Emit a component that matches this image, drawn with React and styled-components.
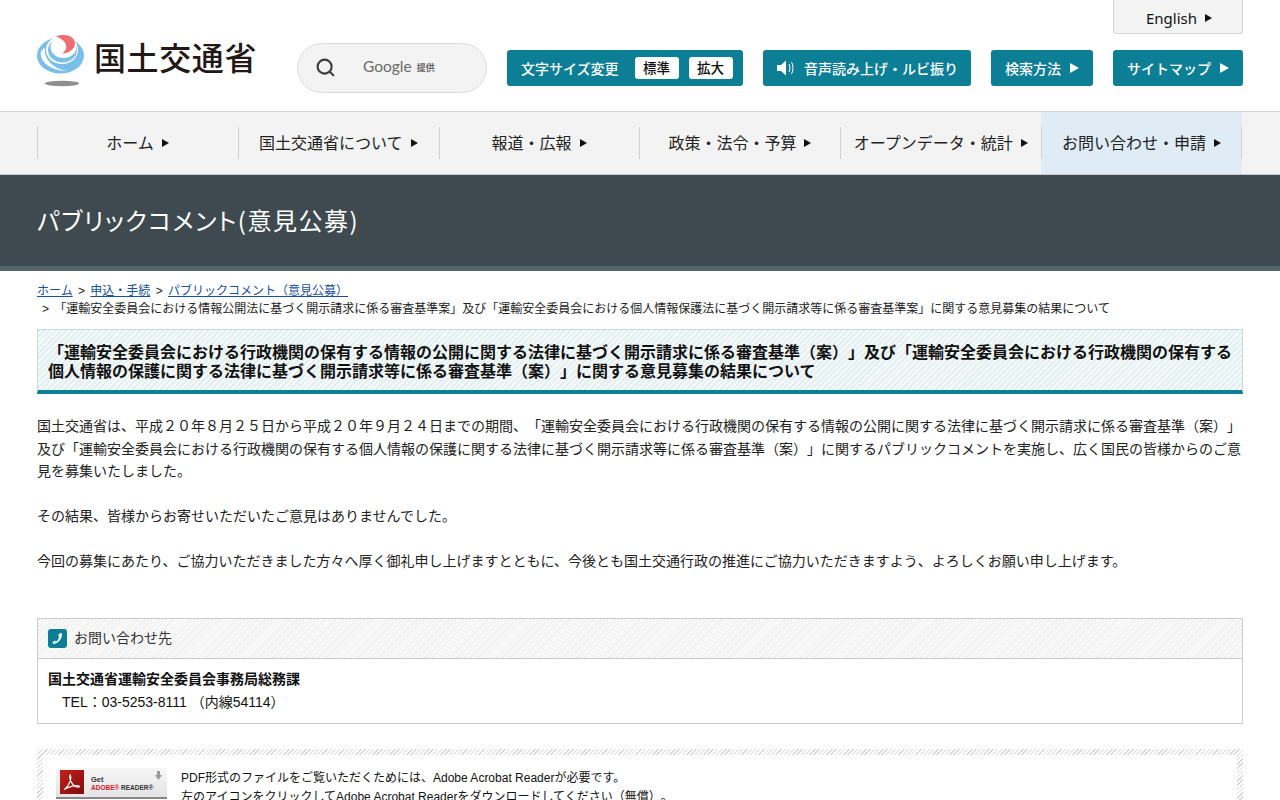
import React from "react";
import styled, { createGlobalStyle } from "styled-components";
import { Search } from "lucide-react";

const Global = createGlobalStyle`
  html, body { margin: 0; padding: 0; background: #fff; }
  body {
    font-family: "Liberation Sans", "Noto Sans CJK JP", sans-serif;
    font-size: 14px;
    line-height: 1.6;
    color: #222;
    text-spacing-trim: space-all;
  }
  * { box-sizing: border-box; }
`;

const TEAL = "#0c7e96";

const Header = styled.header`
  height: 112px;
  padding: 0 37px;
  border-bottom: 1px solid #d4d4d4;
`;
const TopRow = styled.div`
  display: flex;
  justify-content: flex-end;
  height: 34px;
`;
const EnglishTab = styled.a`
  width: 130px;
  height: 34px;
  display: flex;
  align-items: center;
  justify-content: center;
  gap: 8px;
  padding: 3px 0 0 2px;
  background: #f3f3f3;
  border: 1px solid #d5d5d5;
  border-top: none;
  border-radius: 0 0 3px 3px;
  font-family: "Noto Sans", sans-serif;
  font-size: 15px;
  color: #111;
`;
const MainRow = styled.div`
  display: flex;
  align-items: flex-start;
`;
const LogoLink = styled.a`
  width: 219px;
  height: 52px;
  display: flex;
  align-items: flex-start;
  gap: 10px;
`;
const LogoText = styled.span`
  font-family: "Noto Sans CJK JP", sans-serif;
  font-size: 32px;
  font-weight: 500;
  letter-spacing: 0.6px;
  line-height: 44px;
  margin-left: -1px;
  color: #231815;
  white-space: nowrap;
`;
const SearchBox = styled.div`
  width: 190px;
  height: 50px;
  margin: 9px 20px 0 41px;
  padding-left: 17px;
  display: flex;
  align-items: center;
  background: #f3f3f3;
  border: 1px solid #dcdcdc;
  border-radius: 25px;
  color: #3c3c3c;
  svg { margin-bottom: 1px; }
`;
const GoogleWord = styled.span`
  margin: 0 0 4px 27px;
  font-family: "Lato", sans-serif;
  font-size: 15.500px;
  line-height: 20px;
  color: #6a6a6a;
`;
const Provided = styled.span`
  margin-left: 5px;
  font-family: "Noto Sans CJK JP", sans-serif;
  font-size: 9px;
  font-weight: 700;
  color: #666;
`;
const TealButton = styled.a`
  width: ${(p) => p.$w}px;
  height: 36px;
  margin: 16px ${(p) => p.$mr || 0}px 0 0;
  padding: 0 ${(p) => p.$px || 14}px;
  display: flex;
  align-items: center;
  justify-content: ${(p) => p.$justify || "space-between"};
  background: ${TEAL};
  border-radius: 3px;
  color: #fff;
  font-family: "Noto Sans CJK JP", sans-serif;
  font-size: 14px;
  font-weight: 500;
  white-space: nowrap;
`;
const SizeChip = styled.span`
  width: 44px;
  height: 22px;
  margin-left: ${(p) => p.$ml}px;
  display: flex;
  align-items: center;
  justify-content: center;
  background: #fff;
  border-radius: 3px;
  color: #111;
  font-size: 13.500px;
`;
const ButtonLabel = styled.span`
  margin-left: 4px;
`;
const Triangle = styled.i`
  display: inline-block;
  flex: none;
  border-style: solid;
  border-color: transparent;
  border-left-color: ${(p) => p.$color || "#111"};
  border-width: ${(p) => p.$h || 4}px 0 ${(p) => p.$h || 4}px ${(p) => p.$w || 7}px;
`;

const Nav = styled.nav`
  height: 63px;
  padding: 0 38px 0 37px;
  display: grid;
  grid-template-columns: repeat(6, 1fr);
  background: #f3f3f3;
  border-bottom: 1px solid #c8c8c8;
`;
const NavItem = styled.a`
  position: relative;
  display: flex;
  align-items: center;
  justify-content: center;
  gap: 8px;
  background: ${(p) => (p.$active ? "#dfecf6" : "transparent")};
  font-family: "Noto Sans CJK JP", sans-serif;
  font-size: 16px;
  color: #222;
  white-space: nowrap;
  &::before {
    content: "";
    position: absolute;
    left: 0;
    top: 15px;
    height: 32px;
    width: 1px;
    background: #d0d0d0;
  }
  &::after {
    content: "";
    position: absolute;
    right: 0;
    top: 15px;
    height: 32px;
    width: 1px;
    background: ${(p) => (p.$active ? "#d0d0d0" : "transparent")};
  }
`;

const Banner = styled.div`
  height: 96px;
  padding: 0 37px;
  display: flex;
  align-items: center;
  background: #3e4a50;
  border-bottom: 5px solid #55646b;
`;
const BannerTitle = styled.h1`
  margin: 0;
  font-family: "Noto Sans CJK JP", sans-serif;
  font-size: 24px;
  font-weight: 400;
  font-feature-settings: "palt";
  letter-spacing: 1.500px;
  line-height: 1.2;
  color: #fff;
`;

const Main = styled.main`
  padding: 12px 37px 0;
`;
const Crumbs = styled.div`
  font-size: 12px;
  line-height: 17px;
  height: 17px;
  a { color: #1a4fa0; text-decoration: underline; }
`;
const CrumbSep = styled.span`
  margin: 0 2px;
`;
const CurrentCrumb = styled.div`
  padding-left: 5px;
  font-size: 12px;
  line-height: 18px;
  color: #222;
`;
const CurrentMark = styled.span`
  margin-right: 2px;
`;
const PageTitle = styled.h2`
  margin: 11px 0 0;
  height: 65px;
  padding: 13px 10px 0;
  font-size: 16px;
  font-weight: 700;
  line-height: 19px;
  color: #111;
  border: 1px solid #c6dade;
  border-bottom: 4px solid ${TEAL};
  background: repeating-linear-gradient(-45deg, #e4eff2 0 2px, #f4f9fa 2px 4px);
`;
const Lead = styled.p`
  margin: 21.300px 0 0;
  font-size: 14px;
  line-height: 22.400px;
  color: #222;
`;
const ContactBox = styled.section`
  margin-top: 45.700px;
  border: 1px solid #ccc;
`;
const ContactHead = styled.div`
  height: 40px;
  padding-left: 10px;
  display: flex;
  align-items: center;
  gap: 7px;
  font-size: 14px;
  color: #333;
  border-bottom: 1px solid #ccc;
  background: repeating-linear-gradient(-45deg, #eeeeee 0 1px, #fbfbfb 1px 2.500px);
`;
const PhoneIcon = styled.span`
  width: 19px;
  height: 19px;
  display: flex;
  align-items: center;
  justify-content: center;
  background: ${TEAL};
  border-radius: 3px;
`;
const ContactBody = styled.div`
  padding: 9px 10px;
  font-size: 14px;
  line-height: 23px;
  color: #111;
`;
const ContactName = styled.div`
  font-weight: 700;
`;
const ContactTel = styled.div`
  padding-left: 14px;
`;
const PdfBox = styled.section`
  margin: 25px 0 30px;
  padding: 6px;
  background: repeating-linear-gradient(-45deg, #d6d6d6 0 1px, #fff 1px 3px);
`;
const PdfInner = styled.div`
  padding: 13px 13px 14px;
  display: flex;
  gap: 14px;
  background: #fff;
`;
const Badge = styled.a`
  position: relative;
  flex: none;
  width: 111px;
  height: 31px;
  display: flex;
  align-items: center;
  gap: 7px;
  padding: 0 0 0 4px;
  background: linear-gradient(#f6f6f6, #e4e4e4);
  border-bottom: 2px solid #888;
  font-family: "Liberation Sans", sans-serif;
`;
const BadgeMark = styled.span`
  width: 24px;
  height: 24px;
  display: flex;
  align-items: center;
  justify-content: center;
  background: linear-gradient(135deg, #c8201c, #7d0c0c);
`;
const BadgeText = styled.span`
  display: flex;
  flex-direction: column;
  padding-top: 3px;
  font-size: 6.500px;
  font-weight: 700;
  line-height: 8px;
  color: #333;
  white-space: nowrap;
`;
const BadgeGet = styled.span`
  font-size: 7.500px;
`;
const BadgeRed = styled.span`
  color: #d8202a;
`;
const BadgeArrow = styled.svg`
  position: absolute;
  top: 3px;
  right: 5px;
`;
const PdfText = styled.p`
  margin: 1px 0 0;
  font-size: 12px;
  line-height: 19px;
  color: #111;
`;

function Logo() {
  return (
    <svg width="48" height="53" viewBox="0 0 48 53" style={{ flex: "none" }}>
      <ellipse cx="23.5" cy="21.5" rx="23.5" ry="18" fill="#79bfea" />
      <ellipse cx="25" cy="16" rx="16" ry="14" fill="#fff" />
      <ellipse cx="25.5" cy="16" rx="14.5" ry="12.5" fill="#79bfea" />
      <ellipse cx="26.5" cy="13" rx="13" ry="11" fill="#fff" />
      <path d="M19 2.500C28 -1 38 2 38 9.500 38 16 30 20 25 19.500 31 16 32 7 19 2.500Z" fill="#ee6f73" />
      <path d="M8 14C6 24 16 35 30 37 20 37 6 32 4 22 3 18 5 15 8 14Z" fill="#fff" />
      <ellipse cx="25" cy="49.500" rx="17" ry="2.700" fill="#8f8f8f" />
    </svg>
  );
}

function Speaker() {
  return (
    <svg width="20" height="18" viewBox="0 0 20 18" style={{ flex: "none" }}>
      <path d="M1 6h4l5-4.500v15L5 12H1z" fill="#fff" />
      <path d="M13 5c1.300 2.400 1.300 5.600 0 8M15.500 3c2 3.500 2 8.500 0 12" stroke="#fff" strokeWidth="1" fill="none" />
    </svg>
  );
}

function Phone() {
  return (
    <svg width="13" height="13" viewBox="0 0 13 13">
      <path d="M9 1l2 .4c.3 4.800-3.200 9.600-8.300 10.600L1.300 10.500 4 8.600l1 1.100C7 8.500 8 6.500 8 4.200L7 3.600z" fill="#fff" />
    </svg>
  );
}

function AcrobatMark() {
  return (
    <svg width="20" height="20" viewBox="0 0 20 20">
      <path
        d="M2 17.500c2-.8 4-3.500 6-8 .8-2.200 1-5 .2-6.500-.8 1.500-.3 4.500 1 7 1.500 2.800 3.500 4.500 5.500 5 1.200.3 2.500 0 2.800-.6-1-1-4-1-7-.2-3 .7-6 2-8.500 3.300z"
        fill="none"
        stroke="#fff"
        strokeWidth="1.200"
      />
    </svg>
  );
}

const navItems = ["ホーム", "国土交通省について", "報道・広報", "政策・法令・予算", "オープンデータ・統計", "お問い合わせ・申請"];

export default function App() {
  return (
    <>
      <Global />
      <Header>
        <TopRow>
          <EnglishTab>English <Triangle $h={4} $w={7} /></EnglishTab>
        </TopRow>
        <MainRow>
          <LogoLink>
            <Logo />
            <LogoText>国土交通省</LogoText>
          </LogoLink>
          <SearchBox>
            <Search size={21} strokeWidth={2.4} />
            <GoogleWord>Google</GoogleWord>
            <Provided>提供</Provided>
          </SearchBox>
          <TealButton $w={236} $mr={20} $px={10} $justify="flex-start">
            <ButtonLabel>文字サイズ変更</ButtonLabel>
            <SizeChip $ml={16}>標準</SizeChip>
            <SizeChip $ml={10}>拡大</SizeChip>
          </TealButton>
          <TealButton $w={208} $mr={20} $px={13}>
            <Speaker />
            <span>音声読み上げ・ルビ振り</span>
          </TealButton>
          <TealButton $w={102} $mr={20} $px={14}>
            <span>検索方法</span>
            <Triangle $color="#fff" $h={5} $w={9} />
          </TealButton>
          <TealButton $w={130} $px={14}>
            <span>サイトマップ</span>
            <Triangle $color="#fff" $h={5} $w={9} />
          </TealButton>
        </MainRow>
      </Header>
      <Nav>
        {navItems.map((t, i) => (
          <NavItem key={t} $active={i === 5}>
            {t}
            <Triangle $h={4} $w={7} />
          </NavItem>
        ))}
      </Nav>
      <Banner>
        <BannerTitle>パブリックコメント(意見公募)</BannerTitle>
      </Banner>
      <Main>
        <Crumbs>
          <a href="#h">ホーム</a> <CrumbSep>&gt;</CrumbSep> <a href="#a">申込・手続</a> <CrumbSep>&gt;</CrumbSep> <a href="#b">パブリックコメント（意見公募）</a>
        </Crumbs>
        <CurrentCrumb>
          <CurrentMark>&gt;</CurrentMark> 「運輸安全委員会における情報公開法に基づく開示請求に係る審査基準案」及び「運輸安全委員会における個人情報保護法に基づく開示請求等に係る審査基準案」に関する意見募集の結果について
        </CurrentCrumb>
        <PageTitle>
          「運輸安全委員会における行政機関の保有する情報の公開に関する法律に基づく開示請求に係る審査基準（案）」及び「運輸安全委員会における行政機関の保有する個人情報の保護に関する法律に基づく開示請求等に係る審査基準（案）」に関する意見募集の結果について
        </PageTitle>
        <Lead>
          国土交通省は、平成２０年８月２５日から平成２０年９月２４日までの期間、「運輸安全委員会における行政機関の保有する情報の公開に関する法律に基づく開示請求に係る審査基準（案）」及び「運輸安全委員会における行政機関の保有する個人情報の保護に関する法律に基づく開示請求等に係る審査基準（案）」に関するパブリックコメントを実施し、広く国民の皆様からのご意見を募集いたしました。
          <br /><br />
          その結果、皆様からお寄せいただいたご意見はありませんでした。
          <br /><br />
          今回の募集にあたり、ご協力いただきました方々へ厚く御礼申し上げますとともに、今後とも国土交通行政の推進にご協力いただきますよう、よろしくお願い申し上げます。
        </Lead>
        <ContactBox>
          <ContactHead>
            <PhoneIcon><Phone /></PhoneIcon>
            お問い合わせ先
          </ContactHead>
          <ContactBody>
            <ContactName>国土交通省運輸安全委員会事務局総務課</ContactName>
            <ContactTel>TEL：03-5253-8111 （内線54114）</ContactTel>
          </ContactBody>
        </ContactBox>
        <PdfBox>
          <PdfInner>
            <Badge>
              <BadgeMark><AcrobatMark /></BadgeMark>
              <BadgeText>
                <BadgeGet>Get</BadgeGet>
                <span><BadgeRed>ADOBE®</BadgeRed> READER®</span>
              </BadgeText>
              <BadgeArrow width="7" height="9" viewBox="0 0 7 9">
                <path d="M2 0h3v4h2L3.500 9 0 4h2z" fill="#9a9a9a" />
              </BadgeArrow>
            </Badge>
            <PdfText>
              PDF形式のファイルをご覧いただくためには、Adobe Acrobat Readerが必要です。
              <br />
              左のアイコンをクリックしてAdobe Acrobat Readerをダウンロードしてください（無償）。
            </PdfText>
          </PdfInner>
        </PdfBox>
      </Main>
    </>
  );
}
